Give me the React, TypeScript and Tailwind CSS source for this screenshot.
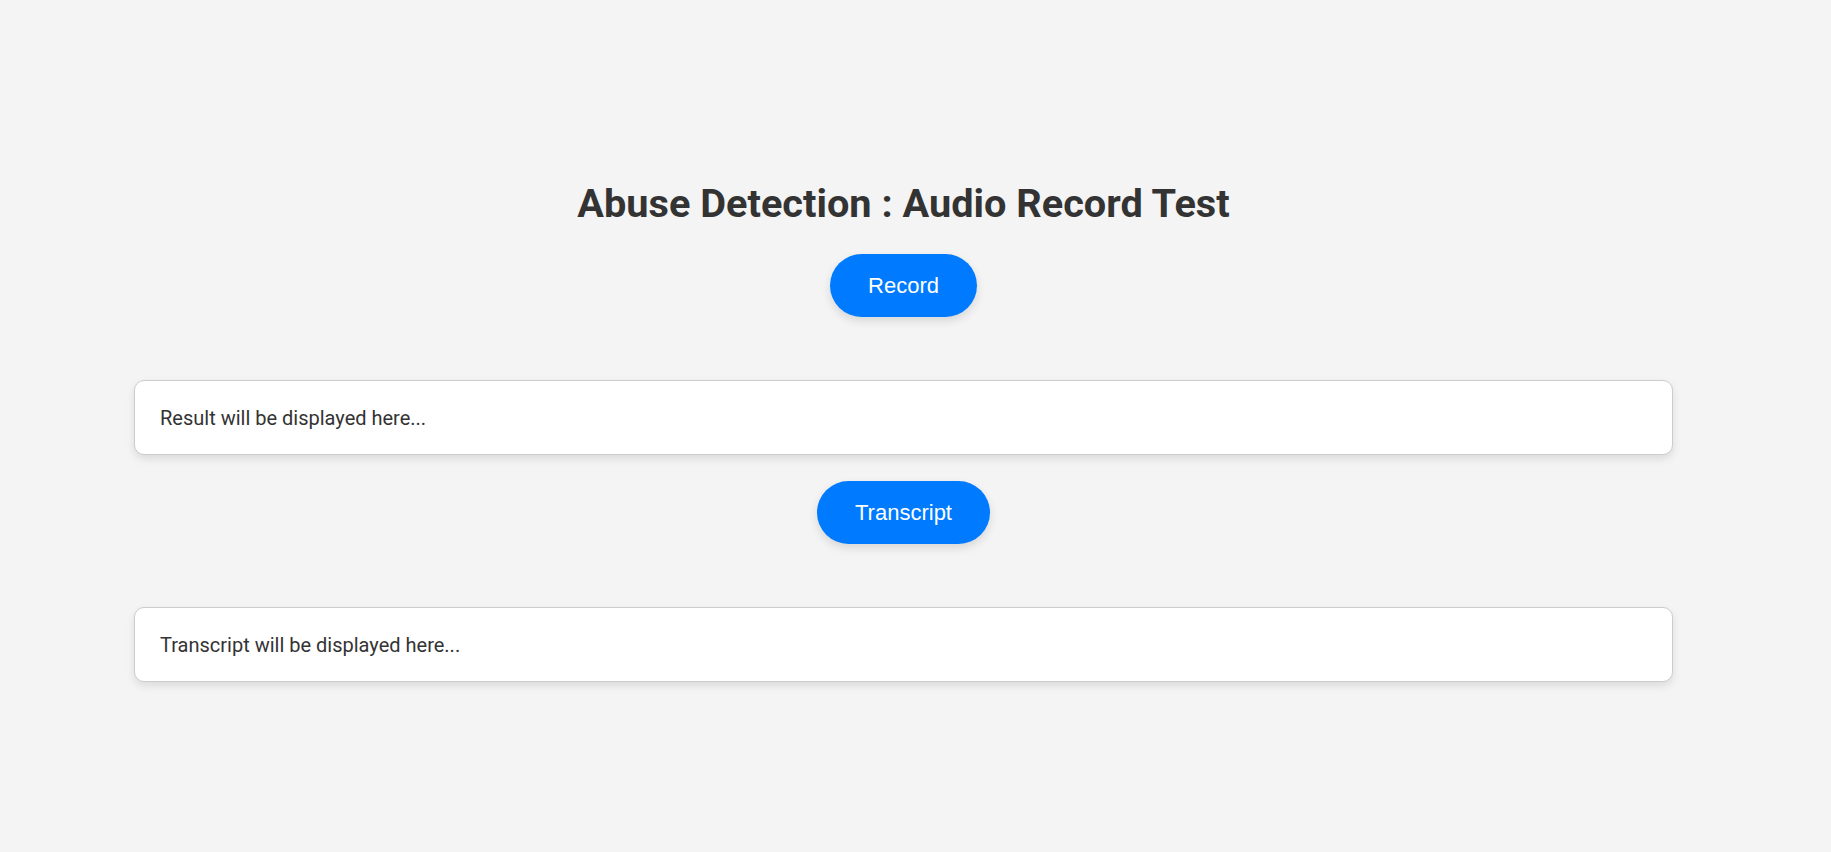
import React from "react";

export default function App() {
  return (
    <div className="min-h-[852px] w-full bg-[#f4f4f4] font-['Roboto',sans-serif]">
      <div className="flex w-[1807px] flex-col items-center pt-[180px]">
        <h1 className="text-[39.7px] font-bold leading-[47px] text-[#333333]">
          Abuse Detection : Audio Record Test
        </h1>
        <button className="mt-[27px] flex h-[63px] items-center justify-center rounded-full bg-[#007bff] px-[38px] font-['Liberation_Sans',Arial,sans-serif] text-[22px] text-white shadow-[0_4px_10px_rgba(0,0,0,0.12)]">
          Record
        </button>
        <div className="mt-[63px] flex h-[75px] w-[1539px] items-center rounded-[10px] border border-[#cccccc] bg-white px-[25px] text-[20px] text-[#333333] shadow-[0_4px_8px_rgba(0,0,0,0.1)]">
          Result will be displayed here...
        </div>
        <button className="mt-[26px] flex h-[63px] items-center justify-center rounded-full bg-[#007bff] px-[38px] font-['Liberation_Sans',Arial,sans-serif] text-[22px] text-white shadow-[0_4px_10px_rgba(0,0,0,0.12)]">
          Transcript
        </button>
        <div className="mt-[63px] flex h-[75px] w-[1539px] items-center rounded-[10px] border border-[#cccccc] bg-white px-[25px] text-[20px] text-[#333333] shadow-[0_4px_8px_rgba(0,0,0,0.1)]">
          Transcript will be displayed here...
        </div>
      </div>
    </div>
  );
}
